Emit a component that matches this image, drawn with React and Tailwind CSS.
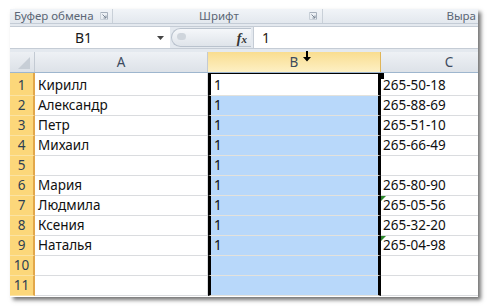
import React from 'react';

const rows = [
  { n: 1, name: 'Кирилл', b: '1', phone: '265-50-18' },
  { n: 2, name: 'Александр', b: '1', phone: '265-88-69' },
  { n: 3, name: 'Петр', b: '1', phone: '265-51-10' },
  { n: 4, name: 'Михаил', b: '1', phone: '265-66-49' },
  { n: 5, name: '', b: '1', phone: '' },
  { n: 6, name: 'Мария', b: '1', phone: '265-80-90' },
  { n: 7, name: 'Людмила', b: '1', phone: '265-05-56', flag: true },
  { n: 8, name: 'Ксения', b: '1', phone: '265-32-20' },
  { n: 9, name: 'Наталья', b: '1', phone: '265-04-98', flag: true },
  { n: 10, name: '', b: '', phone: '' },
  { n: 11, name: '', b: '', phone: '' },
];

function Launcher() {
  return (
    <svg width="8" height="8" viewBox="0 0 8 8" className="shrink-0">
      <path d="M0.5 0.5H7.5V7.5" fill="none" stroke="#a7b0bc" />
      <path d="M0.5 0.5V7.5H7.5" fill="none" stroke="#c9d0d8" />
      <path d="M2.5 2.5L6 6M6 3.5V6H3.5" fill="none" stroke="#7d8896" />
    </svg>
  );
}

export default function App() {
  return (
    <div className="w-[489px] h-[308px] bg-white pt-[9px] pl-[10px]" style={{ fontFamily: '"Noto Sans", sans-serif' }}>
      <div className="w-[468px] h-[288px] overflow-hidden flex flex-col bg-white shadow-[3px_3px_4px_rgba(0,0,0,0.55)]">
        {/* ribbon group captions */}
        <div className="h-[14px] shrink-0 flex bg-gradient-to-b from-[#f1f4f8] to-[#e3e8ee] text-[11.5px] leading-[14px] text-[#5b6675]">
          <div className="w-[103px] shrink-0 flex items-center pl-[4px] pr-[4px] justify-between border-r border-[#c9d0d8]">
            <span className="whitespace-nowrap">Буфер обмена</span>
            <Launcher />
          </div>
          <div className="w-[210px] shrink-0 flex items-center relative border-r border-[#c9d0d8]">
            <span className="absolute left-[86px]">Шрифт</span>
            <div className="absolute right-[5px] top-[3px]"><Launcher /></div>
          </div>
          <div className="flex-1 flex justify-end pr-[2px]">
            <span>Выра</span>
          </div>
        </div>
        <div className="h-px shrink-0 bg-[#c4ccd6]" />
        {/* formula bar */}
        <div className="h-[28px] shrink-0 bg-[#e4e9ef] pt-[2px] pb-[3px] flex flex-col">
          <div className="flex-1 flex bg-white border-y border-[#c5ccd5]">
            <div className="w-[160px] shrink-0 flex items-center relative text-[14px] text-[#1a1a1a]">
              <span className="absolute left-[65px]">B1</span>
              <svg width="7" height="4" viewBox="0 0 7 4" className="absolute left-[147px] top-[9px]">
                <path d="M0 0H7L3.5 4Z" fill="#444" />
              </svg>
            </div>
            <div className="w-[83px] shrink-0 bg-[#e4e9ef] flex items-center relative">
              <div className="absolute left-[1px] top-[1px] bottom-[1px] w-[80px] rounded-l-full bg-gradient-to-b from-[#f5f7fa] to-[#dfe4ea] border border-[#b9c2cd] border-r-0" />
              <div className="absolute left-[7px] top-[6px] w-[9px] h-[7px] rounded-full bg-[#cfd5dc]" />
              <span className="absolute right-[6px] top-[1px] text-[14px] italic font-bold text-[#333]" style={{ fontFamily: '"Liberation Serif", serif' }}>
                f<span className="text-[11px]">x</span>
              </span>
            </div>
            <div className="flex-1 border-l border-[#c5ccd5] flex items-center pl-[8px] text-[14px] text-[#2a1a10]">1</div>
          </div>
        </div>
        {/* column headers */}
        <div className="h-[21px] shrink-0 flex text-[13.5px] text-[#3c4b5e] border-b border-[#9eb6ce]">
          <div className="w-[25px] shrink-0 relative bg-gradient-to-b from-[#edf0f4] to-[#dce1e7] border-r border-[#c3cad3]">
            <svg width="12" height="12" viewBox="0 0 12 12" className="absolute right-[4px] bottom-[3px]">
              <path d="M12 0V12H0Z" fill="#c7ced6" />
            </svg>
          </div>
          <div className="w-[173px] shrink-0 flex items-center justify-center bg-gradient-to-b from-[#eef1f5] to-[#dde2e8] border-r border-[#c3cad3]">A</div>
          <div className="w-[173px] shrink-0 relative flex items-center justify-center bg-gradient-to-b from-[#f9dd8f] to-[#fdf0c4] border-r border-[#e0b558]">
            B
            <svg width="10" height="11" viewBox="0 0 10 11" className="absolute left-[94px] top-[-1px]">
              <path d="M4 0H6V6H9L5 10.5L1 6H4Z" fill="#000" />
            </svg>
          </div>
          <div className="w-[136px] shrink-0 flex items-center justify-center bg-gradient-to-b from-[#eef1f5] to-[#dde2e8]">C</div>
        </div>
        {/* grid */}
        <div className="flex-1 relative">
          {rows.map((r) => (
            <div key={r.n} className={`flex text-[13.5px] leading-[18px] text-[#111] ${r.n === 1 ? 'h-[23px]' : 'h-[20px]'}`}>
              <div className="w-[25px] shrink-0 flex items-end justify-center pb-px bg-[#fcd77a] border-r-2 border-[#e2a74a] border-b border-b-[#fbe3a4] text-[#2e3f52]">
                {r.n}
              </div>
              <div className="w-[173px] shrink-0 flex items-end pl-[3px] pb-px border-b border-r border-[#dadcdf]">
                {r.name}
              </div>
              <div className={`w-[173px] shrink-0 flex items-end pl-[3px] pb-px border-l-[3px] border-r-[3px] border-black border-b border-b-[#e3e2dc] ${r.n === 1 ? 'bg-white' : 'bg-[#b8d8fa]'}`}>
                {r.b}
              </div>
              <div className="w-[136px] shrink-0 relative flex items-end pl-[2px] pb-px border-b border-[#dadcdf]">
                {r.flag && (
                  <svg width="5" height="5" viewBox="0 0 5 5" className="absolute left-0 top-0">
                    <path d="M0 0H5L0 5Z" fill="#2f8a2f" />
                  </svg>
                )}
                {r.phone}
              </div>
            </div>
          ))}
          <div className="absolute left-[368px] top-0 w-[6px] h-[6px] bg-black" />
          <div className="absolute left-[198px] top-0 w-[173px] h-px bg-black" />
        </div>
      </div>
    </div>
  );
}
